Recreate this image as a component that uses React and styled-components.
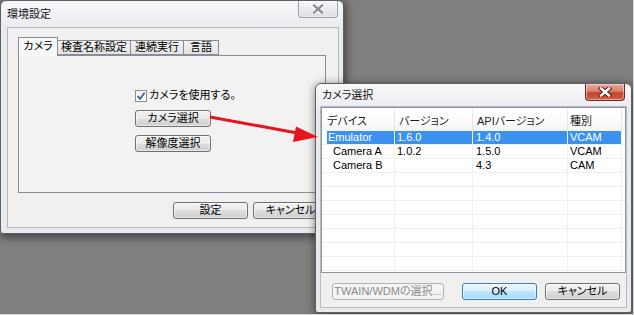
import React from 'react';
import styled, { createGlobalStyle } from 'styled-components';

const GlobalStyle = createGlobalStyle`
  html, body { margin: 0; padding: 0; }
  body {
    font-family: "Liberation Sans", "Noto Sans CJK JP", sans-serif;
    font-size: 11px;
    font-feature-settings: "palt";
    color: #000;
  }
`;

const Desktop = styled.div`
  position: relative;
  width: 634px;
  height: 315px;
  box-sizing: border-box;
  background: #7f7f7f;
  border-right: 1px solid #d6d6d6;
  border-bottom: 1px solid #d6d6d6;
  overflow: hidden;
`;

// windows sit on a desktop, so their place is the content itself
const Window = styled.div`
  position: absolute;
  left: ${p => p.$x}px;
  top: ${p => p.$y}px;
  width: ${p => p.$w}px;
  height: ${p => p.$h}px;
  box-sizing: border-box;
  display: flex;
  flex-direction: column;
  padding: ${p => p.$pad};
  background: linear-gradient(#f6f7f9, #e9ecef 28px, #e7e9ec);
  border: 1px solid #5c6066;
  border-radius: 6px 6px 3px 3px;
  box-shadow: 1px 2px 9px 1px rgba(0, 0, 0, 0.5);
`;

const TitleBar = styled.div`
  height: ${p => p.$h}px;
  flex: none;
  display: flex;
  align-items: flex-start;
  justify-content: space-between;
`;

const Title = styled.span`
  align-self: center;
  padding-left: ${p => p.$indent || 0}px;
  font-size: 11px;
  color: #111;
  line-height: 13px;
`;

const CloseButton = styled.div`
  width: 40px;
  height: 17px;
  margin-right: ${p => p.$mr || 0}px;
  box-sizing: border-box;
  display: flex;
  align-items: center;
  justify-content: center;
  border: 1px solid ${p => (p.$active ? '#6b2a22' : '#9a9ea3')};
  border-top: none;
  border-radius: 0 0 4px 4px;
  background: ${p =>
    p.$active
      ? 'linear-gradient(#e9a99b 0%, #d9806b 45%, #c4452f 55%, #d35f45 100%)'
      : 'linear-gradient(#f7f8f9 0%, #e9ebee 50%, #dcdfe3 100%)'};
  box-shadow: inset 0 0 0 1px rgba(255, 255, 255, 0.45);
`;

const Client = styled.div`
  flex: 1;
  box-sizing: border-box;
  display: flex;
  flex-direction: column;
  padding: ${p => p.$pad};
  background: #f0f0f0;
  border: 1px solid #b6babf;
`;

const TabControl = styled.div`
  width: 308px;
  display: flex;
  flex-direction: column;
`;

const TabStrip = styled.div`
  height: 18px;
  display: flex;
  align-items: flex-end;
`;

const Tab = styled.div`
  position: relative;
  z-index: ${p => (p.$active ? 1 : 0)};
  width: ${p => p.$w}px;
  height: ${p => (p.$active ? 19 : 15)}px;
  margin-bottom: ${p => (p.$active ? -1 : 0)}px;
  box-sizing: border-box;
  display: flex;
  align-items: center;
  justify-content: center;
  border: 1px solid #898c95;
  border-bottom: ${p => (p.$active ? 'none' : '1px solid #898c95')};
  border-left: ${p => (p.$first ? '1px solid #898c95' : p.$active ? '1px solid #898c95' : 'none')};
  background: ${p => (p.$active ? '#f8f8f8' : 'linear-gradient(#f3f3f3, #e3e3e3)')};
  font-size: 11px;
  line-height: 13px;
  padding-bottom: ${p => (p.$active ? 2 : 0)}px;
`;

const TabPanel = styled.div`
  height: 138px;
  box-sizing: border-box;
  display: flex;
  flex-direction: column;
  align-items: flex-start;
  gap: 8px;
  padding: 33px 0 0 116px;
  background: #f2f2f2;
  border: 1px solid #898c95;
`;

const CheckRow = styled.label`
  height: 13px;
  display: flex;
  align-items: center;
  gap: 2px;
  font-size: 11px;
  line-height: 13px;
`;

const CheckBox = styled.span`
  width: 12px;
  height: 12px;
  box-sizing: border-box;
  display: flex;
  align-items: center;
  justify-content: center;
  border: 1px solid #8e8f8f;
  background: linear-gradient(#f1f1f1, #ffffff);
`;

const Button = styled.div`
  width: ${p => p.$w || 75}px;
  height: 17px;
  box-sizing: border-box;
  display: flex;
  align-items: center;
  justify-content: center;
  border-radius: 3px;
  font-size: 11px;
  line-height: 13px;
  border: 1px solid ${p => (p.$kind === 'default' ? '#3c7fb1' : p.$kind === 'disabled' ? '#adb2b5' : '#707070')};
  color: ${p => (p.$kind === 'disabled' ? '#8a8a8a' : '#000')};
  background: ${p =>
    p.$kind === 'default'
      ? 'linear-gradient(#eaf6fd 0%, #d9f0fc 50%, #bee6fd 50%, #a7d9f5 100%)'
      : p.$kind === 'disabled'
      ? '#f4f4f4'
      : 'linear-gradient(#f2f2f2 0%, #ebebeb 50%, #dddddd 50%, #cfcfcf 100%)'};
  box-shadow: inset 0 0 0 1px rgba(255, 255, 255, ${p => (p.$kind === 'disabled' ? 0 : 0.55)});
`;

const ButtonRow = styled.div`
  display: flex;
  justify-content: ${p => p.$justify || 'flex-end'};
  gap: ${p => p.$gap || 5}px;
  margin-top: ${p => p.$mt}px;
  padding: ${p => p.$pad};
`;

const Spacer = styled.div`
  flex: 1;
`;

const ListView = styled.div`
  height: 166px;
  box-sizing: border-box;
  border: 1px solid #8f949b;
  background: #fff;
  display: flex;
  flex-direction: column;
`;

const gridCols = '73px 78px 95px 54px 1fr';

const HeaderRow = styled.div`
  height: 23px;
  display: grid;
  grid-template-columns: ${gridCols};
  background: linear-gradient(#ffffff, #fbfbfc 60%, #f3f4f6);
`;

const HeaderCell = styled.div`
  display: flex;
  align-items: center;
  padding-left: ${p => p.$pl}px;
  border-right: ${p => (p.$last ? 'none' : '1px solid #e3e6ea')};
  font-size: 11px;
  color: #1c1c1c;
`;

const Row = styled.div`
  height: 14px;
  box-sizing: border-box;
  display: grid;
  grid-template-columns: ${gridCols};
  border-bottom: 1px solid #f0f0f0;
`;

const Cell = styled.div`
  display: flex;
  align-items: center;
  padding-left: ${p => p.$pl}px;
  border-right: ${p => (p.$last ? 'none' : '1px solid #f0f0f0')};
  font-size: 11px;
  line-height: 13px;
  white-space: nowrap;
  color: ${p => (p.$sel ? '#fff' : '#000')};
  background: ${p =>
    !p.$sel ? 'transparent' : p.$first ? 'linear-gradient(to right, transparent 5px, #3a92ee 5px)' : '#3a92ee'};
`;

const Overlay = styled.svg`
  position: absolute;
  left: 0;
  top: 0;
  z-index: 5;
  pointer-events: none;
`;

const CloseGlyph = ({ active }) => (
  <svg width="14" height="10" viewBox="0 0 14 10">
    <path d="M3 1.5 L11 8.5 M11 1.5 L3 8.5" stroke={active ? '#5a1a12' : '#ffffff'} strokeWidth="4.4" strokeLinecap="square" />
    <path d="M3 1.5 L11 8.5 M11 1.5 L3 8.5" stroke={active ? '#ffffff' : '#8c9096'} strokeWidth="2.4" strokeLinecap="square" />
  </svg>
);

const columns = [
  { label: 'デバイス', pl: 5 },
  { label: 'バージョン', pl: 4 },
  { label: 'APIバージョン', pl: 4 },
  { label: '種別', pl: 2 },
];

const devices = [
  { name: 'Emulator', version: '1.6.0', api: '1.4.0', kind: 'VCAM', selected: true },
  { name: 'Camera A', version: '1.0.2', api: '1.5.0', kind: 'VCAM', indent: true },
  { name: 'Camera B', version: '', api: '4.3', kind: 'CAM', indent: true },
];

const rows = [...devices, ...Array.from({ length: 7 }, () => null)];

const tabs = [
  { label: 'カメラ', w: 40, active: true },
  { label: '検査名称設定', w: 73 },
  { label: '連続実行', w: 53 },
  { label: '言語', w: 35 },
];

function SettingsWindow() {
  return (
    <Window $x={0} $y={0} $w={344} $h={234} $pad="0 4px 5px 6px">
      <TitleBar $h={26}>
        <Title>環境設定</Title>
        <CloseButton $mr={1}>
          <CloseGlyph />
        </CloseButton>
      </TitleBar>
      <Client $pad="9px 0 0 10px">
        <TabControl>
          <TabStrip>
            {tabs.map((t, i) => (
              <Tab key={t.label} $w={t.w} $active={t.active} $first={i === 0}>
                {t.label}
              </Tab>
            ))}
          </TabStrip>
          <TabPanel>
            <CheckRow>
              <CheckBox>
                <svg width="10" height="10" viewBox="0 0 10 10">
                  <path d="M1.5 5 L4 7.8 L8.6 1.8" fill="none" stroke="#3d5791" strokeWidth="1.7" />
                </svg>
              </CheckBox>
              カメラを使用する。
            </CheckRow>
            <Button $w={76}>カメラ選択</Button>
            <Button $w={76}>解像度選択</Button>
          </TabPanel>
        </TabControl>
        <ButtonRow $mt={9} $pad="0 10px 0 0">
          <Button>設定</Button>
          <Button>キャンセル</Button>
        </ButtonRow>
      </Client>
    </Window>
  );
}

function CameraWindow() {
  return (
    <Window $x={315} $y={83} $w={317} $h={230} $pad="0 4px 4px 4px">
      <TitleBar $h={22}>
        <Title $indent={2}>カメラ選択</Title>
        <CloseButton $active $mr={2}>
          <CloseGlyph active />
        </CloseButton>
      </TitleBar>
      <Client $pad="0">
        <ListView>
          <HeaderRow>
            {columns.map(c => (
              <HeaderCell key={c.label} $pl={c.pl}>
                {c.label}
              </HeaderCell>
            ))}
            <HeaderCell $last />
          </HeaderRow>
          {rows.map((d, i) => (
            <Row key={i}>
              <Cell $first $sel={d && d.selected} $pl={d && d.indent ? 11 : 6}>
                {d ? d.name : ''}
              </Cell>
              <Cell $sel={d && d.selected} $pl={2}>{d ? d.version : ''}</Cell>
              <Cell $sel={d && d.selected} $pl={3}>{d ? d.api : ''}</Cell>
              <Cell $sel={d && d.selected} $pl={2}>{d ? d.kind : ''}</Cell>
              <Cell $last />
            </Row>
          ))}
        </ListView>
        <ButtonRow $mt={10} $gap={8} $pad="0 6px 0 11px">
          <Button $w={112} $kind="disabled">TWAIN/WDMの選択...</Button>
          <Spacer />
          <Button $kind="default">OK</Button>
          <Button>キャンセル</Button>
        </ButtonRow>
      </Client>
    </Window>
  );
}

export default function App() {
  return (
    <>
      <GlobalStyle />
      <Desktop>
        <SettingsWindow />
        <CameraWindow />
        <Overlay width="634" height="315" viewBox="0 0 634 315">
          <line x1="210" y1="117" x2="300" y2="133.5" stroke="#e8141b" strokeWidth="3" />
          <polygon points="318,137 296,126.5 293,142" fill="#e8141b" />
        </Overlay>
      </Desktop>
    </>
  );
}
